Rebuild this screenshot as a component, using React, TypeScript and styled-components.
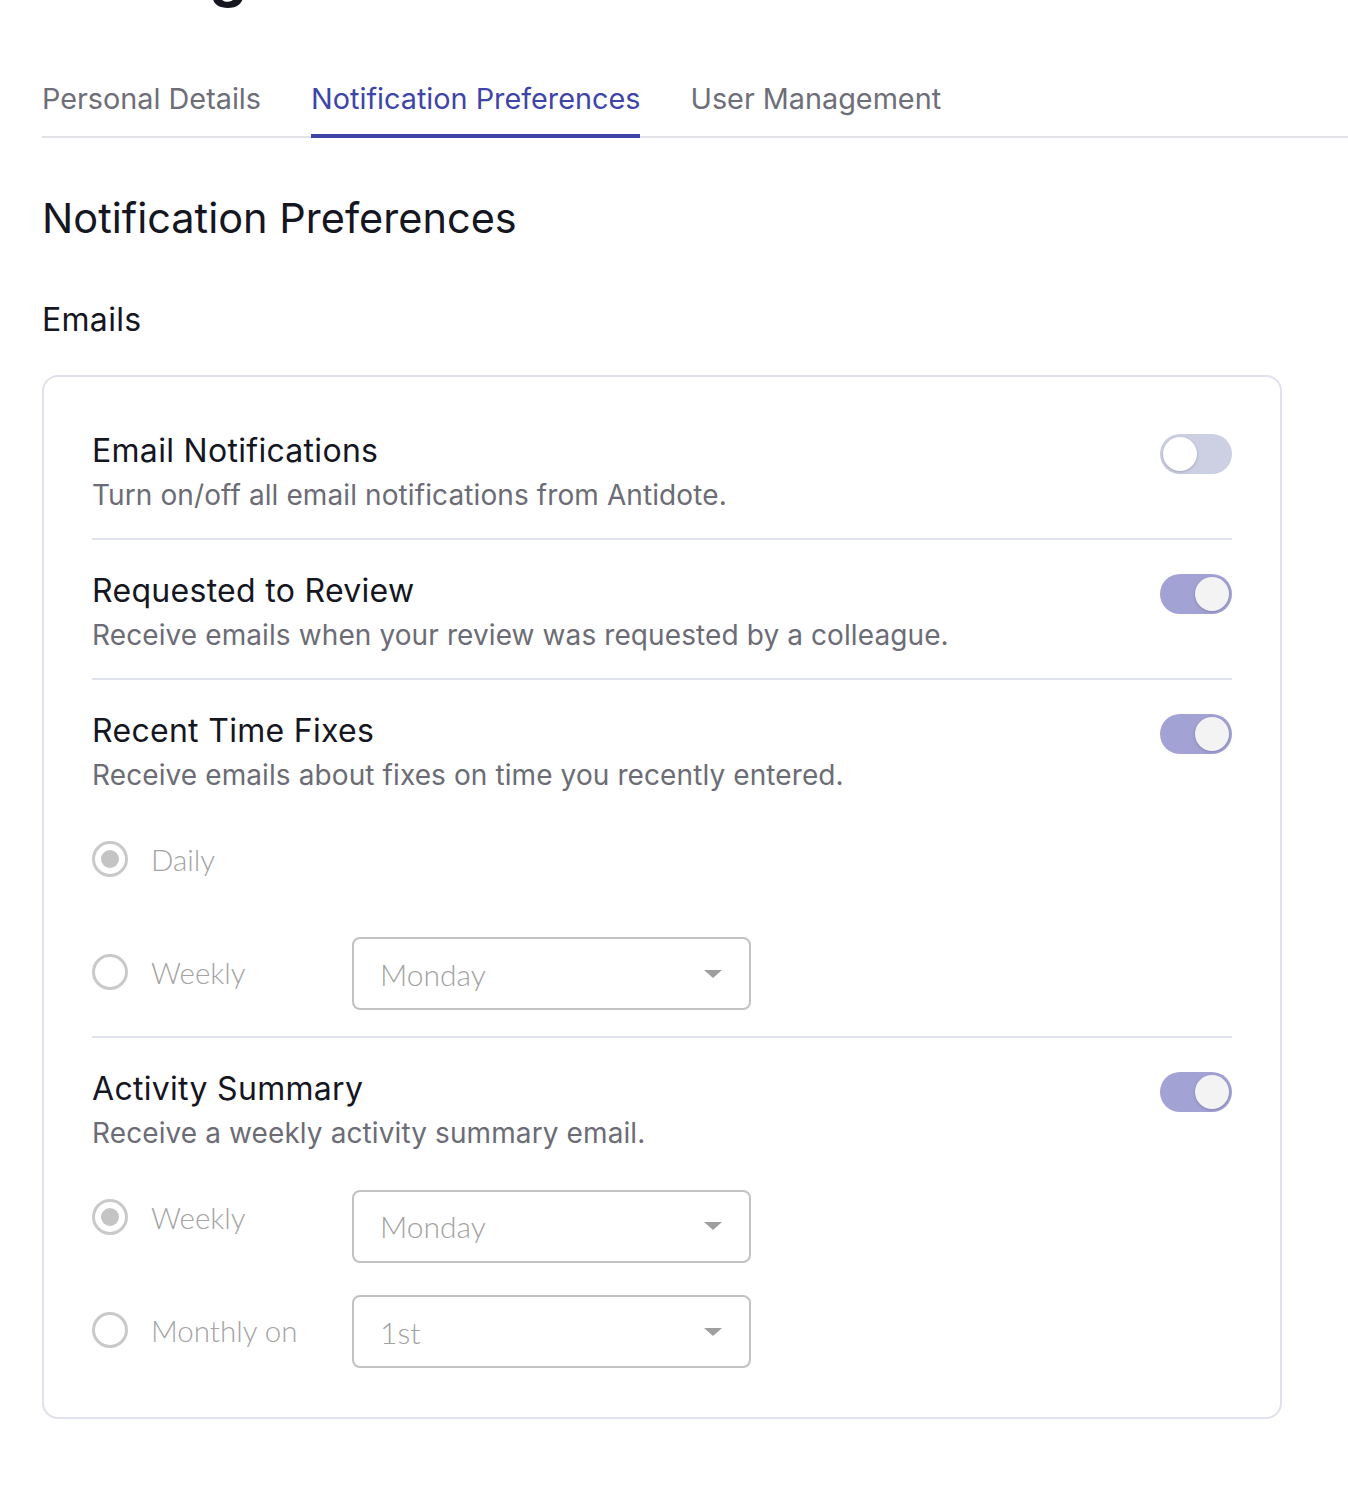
import React from "react";
import styled, { createGlobalStyle } from "styled-components";

const GlobalStyle = createGlobalStyle`
  html, body { margin: 0; padding: 0; background: #ffffff; }
  body { font-family: Inter, "Noto Sans", sans-serif; color: #15161f; overflow: hidden; }
  * { box-sizing: border-box; }
`;

const Page = styled.div`
  padding: 0 0 72px 42px;
  display: flex;
  flex-direction: column;
`;

const PageTitle = styled.h1`
  margin: -56px 0 0 0;
  font-size: 59px;
  line-height: 60px;
  font-weight: 700;
  color: #15161f;
`;

const TabBar = styled.nav`
  margin-top: 77px;
  display: flex;
  gap: 50px;
  border-bottom: 2px solid #e2e2e6;
`;

const Tab = styled.button<{ $active?: boolean }>`
  background: none;
  border: none;
  padding: 0 0 17px 0;
  margin-bottom: -2px;
  font-family: inherit;
  font-size: 28.8px;
  line-height: 36px;
  letter-spacing: 0;
  color: ${(p) => (p.$active ? "#3f45a8" : "#6e6e78")};
  border-bottom: 4px solid ${(p) => (p.$active ? "#3f45a8" : "transparent")};
  cursor: pointer;
`;

const SectionTitle = styled.h2`
  margin: 56px 0 0 0;
  font-size: 41.5px;
  line-height: 48px;
  font-weight: 400;
  letter-spacing: 0;
  color: #15161f;
`;

const SubTitle = styled.h3`
  margin: 59px 0 0 0;
  font-size: 32px;
  line-height: 38px;
  font-weight: 400;
  letter-spacing: 0.3px;
  color: #15161f;
`;

const Card = styled.section`
  margin-top: 36px;
  width: 1240px;
  border: 2px solid #e0e1ee;
  border-radius: 16px;
  padding: 23px 48px 49px 48px;
  display: flex;
  flex-direction: column;
`;

const Setting = styled.div<{ $last?: boolean; $tight?: boolean }>`
  padding: 31px 0 ${(p) => (p.$last ? "0" : p.$tight ? "26px" : "25px")} 0;
  border-bottom: ${(p) => (p.$last ? "none" : "2px solid #e0e2ee")};
  display: flex;
  flex-direction: column;
`;

const SettingHead = styled.div`
  display: flex;
  align-items: flex-start;
  justify-content: space-between;
`;

const SettingText = styled.div`
  display: flex;
  flex-direction: column;
  gap: 6px;
`;

const SettingTitle = styled.div`
  font-size: 32px;
  line-height: 40px;
  letter-spacing: 0.3px;
  color: #15161f;
`;

const SettingDesc = styled.div`
  font-size: 28px;
  line-height: 36px;
  letter-spacing: 0.1px;
  color: #6c6c76;
`;

const Track = styled.button<{ $on?: boolean }>`
  position: relative;
  margin-top: 3px;
  width: 72px;
  height: 40px;
  border-radius: 20px;
  border: none;
  padding: 0;
  background: ${(p) => (p.$on ? "#a3a2d4" : "#cdd0e3")};
  cursor: pointer;
  flex-shrink: 0;
`;

const Knob = styled.span<{ $on?: boolean }>`
  position: absolute;
  top: 3px;
  left: ${(p) => (p.$on ? "35px" : "3px")};
  width: 34px;
  height: 34px;
  border-radius: 50%;
  background: ${(p) => (p.$on ? "#f3f3f3" : "#ffffff")};
  box-shadow: 0 1px 3px rgba(60, 60, 100, 0.3);
`;

const Options = styled.div`
  margin-top: 31px;
  display: flex;
  flex-direction: column;
  gap: 40px;
`;

const OptionRow = styled.div`
  height: 73px;
  display: flex;
  align-items: center;
`;

const RadioLabel = styled.label`
  width: 260px;
  display: flex;
  align-items: center;
  gap: 23px;
  font-family: Lato, "Noto Sans", sans-serif;
  font-weight: 300;
  font-size: 29.5px;
  color: #a4a4a4;
  margin-top: -3px;
`;

const RadioCircle = styled.span<{ $checked?: boolean }>`
  width: 36px;
  height: 36px;
  border-radius: 50%;
  border: 3px solid #c9c9c9;
  display: flex;
  align-items: center;
  justify-content: center;
  flex-shrink: 0;
  &::after {
    content: "";
    width: 18px;
    height: 18px;
    border-radius: 50%;
    background: #c4c4c4;
    display: ${(p) => (p.$checked ? "block" : "none")};
  }
`;

const Select = styled.div<{ $shift?: number }>`
  width: 399px;
  height: 73px;
  margin-top: ${(p) => (p.$shift ? `${p.$shift}px` : "0")};
  border: 2px solid #c2c2c2;
  border-radius: 8px;
  display: flex;
  align-items: center;
  justify-content: space-between;
  padding: 0 27px 0 26px;
  font-family: Lato, "Noto Sans", sans-serif;
  font-weight: 300;
  font-size: 30px;
  color: #a2a2a2;
`;

const Caret = styled.span`
  width: 0;
  height: 0;
  border-left: 9px solid transparent;
  border-right: 9px solid transparent;
  border-top: 8px solid #9e9e9e;
`;

function Toggle({ on }: { on?: boolean }) {
  return (
    <Track $on={on} aria-pressed={on}>
      <Knob $on={on} />
    </Track>
  );
}

function Radio({ label, checked }: { label: string; checked?: boolean }) {
  return (
    <RadioLabel>
      <RadioCircle $checked={checked} />
      {label}
    </RadioLabel>
  );
}

function Dropdown({ value, shift }: { value: string; shift?: number }) {
  return (
    <Select $shift={shift}>
      <span>{value}</span>
      <Caret />
    </Select>
  );
}

export default function App() {
  return (
    <>
      <GlobalStyle />
      <Page>
        <PageTitle>Settings</PageTitle>
        <TabBar>
          <Tab>Personal Details</Tab>
          <Tab $active>Notification Preferences</Tab>
          <Tab>User Management</Tab>
        </TabBar>
        <SectionTitle>Notification Preferences</SectionTitle>
        <SubTitle>Emails</SubTitle>
        <Card>
          <Setting>
            <SettingHead>
              <SettingText>
                <SettingTitle>Email Notifications</SettingTitle>
                <SettingDesc>Turn on/off all email notifications from Antidote.</SettingDesc>
              </SettingText>
              <Toggle />
            </SettingHead>
          </Setting>
          <Setting>
            <SettingHead>
              <SettingText>
                <SettingTitle>Requested to Review</SettingTitle>
                <SettingDesc>Receive emails when your review was requested by a colleague.</SettingDesc>
              </SettingText>
              <Toggle on />
            </SettingHead>
          </Setting>
          <Setting $tight>
            <SettingHead>
              <SettingText>
                <SettingTitle>Recent Time Fixes</SettingTitle>
                <SettingDesc>Receive emails about fixes on time you recently entered.</SettingDesc>
              </SettingText>
              <Toggle on />
            </SettingHead>
            <Options>
              <OptionRow>
                <Radio label="Daily" checked />
              </OptionRow>
              <OptionRow>
                <Radio label="Weekly" />
                <Dropdown value="Monday" />
              </OptionRow>
            </Options>
          </Setting>
          <Setting $last>
            <SettingHead>
              <SettingText>
                <SettingTitle>Activity Summary</SettingTitle>
                <SettingDesc>Receive a weekly activity summary email.</SettingDesc>
              </SettingText>
              <Toggle on />
            </SettingHead>
            <Options>
              <OptionRow>
                <Radio label="Weekly" checked />
                <Dropdown value="Monday" shift={15} />
              </OptionRow>
              <OptionRow>
                <Radio label="Monthly on" />
                <Dropdown value="1st" />
              </OptionRow>
            </Options>
          </Setting>
        </Card>
      </Page>
    </>
  );
}
